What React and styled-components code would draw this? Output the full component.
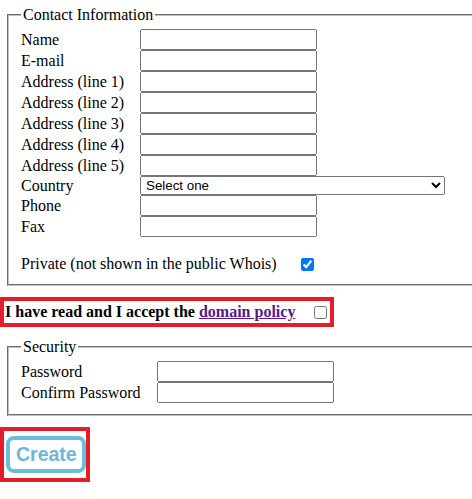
import React from "react";
import styled, { createGlobalStyle } from "styled-components";

// page reset
const GlobalStyle = createGlobalStyle`
  body {
    margin: 0;
    font-family: "Liberation Serif", "Times New Roman", serif;
    font-size: 16px;
    color: #000;
    background: #fff;
    overflow: hidden;
  }
`;

const Page = styled.form`
  padding-top: 6px;
  width: 490px;
`;

const Fieldset = styled.fieldset`
  margin: ${(p) => p.$top || 0}px 0 0 7px;
  padding: 5px 12px 11px;
  border: 2px groove rgb(192, 192, 192);
  width: 480px;
  box-sizing: border-box;
`;

const Legend = styled.legend`
  padding: 0 2px;
`;

// label / field grid
const Grid = styled.div`
  display: grid;
  grid-template-columns: ${(p) => p.$labelWidth}px auto;
  align-items: center;
  justify-items: start;
`;

const Label = styled.label`
  line-height: 18px;
  white-space: nowrap;
`;

const TextInput = styled.input`
  width: 177px;
  height: 21px;
  box-sizing: border-box;
  margin: 0;
  font-family: "Liberation Sans", Arial, sans-serif;
  font-size: 13.33px;
`;

const Select = styled.select`
  width: 305px;
  height: 19px;
  box-sizing: border-box;
  margin: 0;
  padding: 0 0 0 1px;
  font-family: "Liberation Sans", Arial, sans-serif;
  font-size: 13.33px;
`;

const PrivateRow = styled.div`
  display: flex;
  align-items: center;
  margin-top: 18px;
  line-height: 18px;
`;

const Check = styled.input.attrs({ type: "checkbox" })`
  width: 13px;
  height: 13px;
  margin: 0 0 0 ${(p) => p.$gap}px;
`;

// red highlight boxes
const Highlight = styled.div`
  display: flex;
  align-items: center;
  border: 4px solid #e31e2a;
  box-sizing: border-box;
`;

const PolicyBox = styled(Highlight)`
  width: 334px;
  height: 30px;
  margin-top: 11px;
  padding: 0 5px 0 1px;
  font-weight: bold;
  white-space: nowrap;
`;

const PolicyLink = styled.a`
  color: #551a8b;
  text-decoration: underline;
  margin-left: 4px;
`;

const ButtonBox = styled(Highlight)`
  width: 90px;
  height: 55px;
  margin-top: 11px;
  padding: 0 0 0 2px;
`;

const CreateButton = styled.button`
  background: #fff;
  border: 4px solid #6cbcdc;
  border-radius: 8px;
  color: #6cb8da;
  font-family: "Liberation Sans", Arial, sans-serif;
  font-weight: bold;
  font-size: 19.5px;
  line-height: 23px;
  padding: 3px 5px 3px 6px;
  cursor: pointer;
`;

const contactRows = [
  "Name",
  "E-mail",
  "Address (line 1)",
  "Address (line 2)",
  "Address (line 3)",
  "Address (line 4)",
  "Address (line 5)",
];

export default function App() {
  return (
    <>
      <GlobalStyle />
      <Page onSubmit={(e) => e.preventDefault()}>
        <Fieldset>
          <Legend>Contact Information</Legend>
          <Grid $labelWidth={119}>
            {contactRows.map((label) => (
              <React.Fragment key={label}>
                <Label>{label}</Label>
                <TextInput type="text" />
              </React.Fragment>
            ))}
            <Label>Country</Label>
            <Select defaultValue="">
              <option value="">Select one</option>
            </Select>
            <Label>Phone</Label>
            <TextInput type="text" />
            <Label>Fax</Label>
            <TextInput type="text" />
          </Grid>
          <PrivateRow>
            Private (not shown in the public Whois)
            <Check $gap={24} defaultChecked />
          </PrivateRow>
        </Fieldset>

        <PolicyBox>
          I have read and I accept the
          <PolicyLink href="#policy">domain policy</PolicyLink>
          <Check $gap={19} />
        </PolicyBox>

        <Fieldset $top={11}>
          <Legend>Security</Legend>
          <Grid $labelWidth={136}>
            <Label>Password</Label>
            <TextInput type="password" />
            <Label>Confirm Password</Label>
            <TextInput type="password" />
          </Grid>
        </Fieldset>

        <ButtonBox>
          <CreateButton type="submit">Create</CreateButton>
        </ButtonBox>
      </Page>
    </>
  );
}
